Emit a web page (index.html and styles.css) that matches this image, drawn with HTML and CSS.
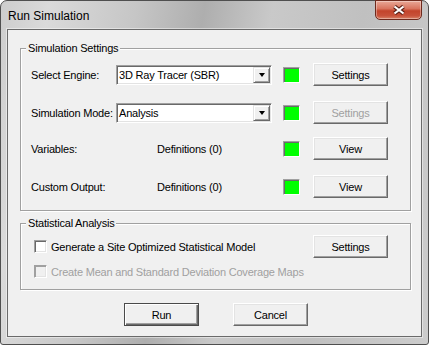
FILE: index.html
```html
<!DOCTYPE html>
<html lang="en">
<head>
<meta charset="utf-8">
<title>Run Simulation</title>
<link rel="stylesheet" href="styles.css">
</head>
<body>
<div class="window">
  <!-- title bar -->
  <div class="titlebar">
    <span class="title">Run Simulation</span>
    <button class="close" aria-label="Close">
      <svg width="14" height="10" viewBox="0 0 14 10">
        <path d="M2.5 1.5 L11.5 8.5 M11.5 1.5 L2.5 8.5" stroke="#5a2016" stroke-width="4.2" fill="none"/>
        <path d="M2.5 1.5 L11.5 8.5 M11.5 1.5 L2.5 8.5" stroke="#fff" stroke-width="2.2" fill="none"/>
      </svg>
    </button>
  </div>

  <div class="client">
    <!-- simulation settings -->
    <div class="group group-sim">
      <div class="group-title">Simulation Settings</div>

      <div class="row row-first">
        <span class="label">Select Engine:</span>
        <div class="combo"><span class="combo-text">3D Ray Tracer (SBR)</span><span class="combo-btn"></span></div>
        <span class="led"></span>
        <button class="btn">Settings</button>
      </div>

      <div class="row">
        <span class="label">Simulation Mode:</span>
        <div class="combo"><span class="combo-text">Analysis</span><span class="combo-btn"></span></div>
        <span class="led"></span>
        <button class="btn" disabled>Settings</button>
      </div>

      <div class="row row-tight">
        <span class="label">Variables:</span>
        <span class="value">Definitions (0)</span>
        <span class="led"></span>
        <button class="btn">View</button>
      </div>

      <div class="row">
        <span class="label">Custom Output:</span>
        <span class="value">Definitions (0)</span>
        <span class="led"></span>
        <button class="btn">View</button>
      </div>
    </div>

    <!-- statistical analysis -->
    <div class="group group-stat">
      <div class="group-title">Statistical Analysis</div>

      <div class="row row-check">
        <span class="check"></span>
        <span class="check-label">Generate a Site Optimized Statistical Model</span>
        <button class="btn btn-right">Settings</button>
      </div>

      <div class="row row-check row-small is-disabled">
        <span class="check"></span>
        <span class="check-label">Create Mean and Standard Deviation Coverage Maps</span>
      </div>
    </div>

    <div class="actions">
      <button class="btn btn-default">Run</button>
      <button class="btn">Cancel</button>
    </div>
  </div>
</div>
</body>
</html>
```

FILE: styles.css
```css
/* ── base ───────────────────────────── */
*,*::before,*::after{box-sizing:border-box}
html,body{margin:0;background:#fff}
body{font-family:"Liberation Sans",Arial,sans-serif;font-size:11px;
     color:#000;letter-spacing:-.2px}

/* ── window frame ───────────────────── */
.window{width:429px;height:345px;display:flex;flex-direction:column;
        padding:0 6px 7px;border:1px solid #4f4f4f;border-radius:7px 7px 3px 3px;
        background:linear-gradient(100deg,#cdcdcd 0%,#dadada 10%,#c6c6c6 28%,
                   #aeaeae 42%,#c9c9c9 56%,#c0c0c0 75%,#cccccc 100%)}
.titlebar{height:28px;flex:none;display:flex;align-items:flex-start;
          justify-content:space-between}
.title{margin:8px 0 0 1px;font-size:12px;line-height:15px;letter-spacing:0}
.close{width:47px;height:20px;margin-top:-1px;padding:0;
       display:flex;align-items:center;justify-content:center;
       border:1px solid #6e2a1d;border-radius:0 0 5px 5px;
       background:linear-gradient(#e9a897,#d9755f 42%,#c3442b 55%,#c8523a 82%,#d98468);
       box-shadow:inset 0 0 0 1px rgba(255,255,255,.35)}

/* ── client area ────────────────────── */
.client{flex:1;display:flex;flex-direction:column;padding-top:18px;
        background:#f0f0f0;border:1px solid #6a6a6a;
        box-shadow:0 0 0 1px rgba(255,255,255,.45)}

/* ── group boxes ────────────────────── */
.group{margin:0 10px 0 12px;padding:0 22px 12px 10px;
       border:1px solid #a0a0a0;box-shadow:inset 1px 1px #fff,1px 1px #fff}
.group-stat{margin-top:12px;padding-bottom:11px}
.group-title{width:max-content;margin:-7px 0 0 -5px;padding:0 2px;
             line-height:13px;background:#f0f0f0}

.row{display:flex;align-items:center;height:23px;margin-top:15px}
.row-first{margin-top:8px}
.row-tight{margin-top:13px}
.group-stat .row-check{margin-top:5px}
.group-stat .row-small{height:13px;margin-top:7px}

.label{width:85px;flex:none;white-space:nowrap}
.value{width:156px;flex:none;padding-left:41px;white-space:nowrap}

/* ── combo box ──────────────────────── */
.combo{width:156px;height:20px;flex:none;display:flex;padding:1px;background:#fff;
       border:1px solid;border-color:#a0a0a0 #fff #fff #a0a0a0;
       box-shadow:inset 1px 1px #696969,inset -1px -1px #e3e3e3}
.combo-text{flex:1;padding-left:1px;line-height:16px;white-space:nowrap;overflow:hidden}
.combo-btn{width:17px;height:16px;flex:none;display:flex;align-items:center;
           justify-content:center;background:#f0f0f0;
           border:1px solid;border-color:#e3e3e3 #696969 #696969 #e3e3e3;
           box-shadow:inset 1px 1px #fff,inset -1px -1px #a0a0a0}
.combo-btn::after{content:"";width:1px;height:0;
                  border-left:3px solid transparent;border-right:3px solid transparent;
                  border-top:4px solid #000}

/* ── status indicator ───────────────── */
.led{width:17px;height:16px;flex:none;margin:0 13px 0 11px;background:#00ff00;
     border:1px solid;border-color:#a0a0a0 #fff #fff #a0a0a0;
     box-shadow:inset 1px 1px #696969}

/* ── checkbox ───────────────────────── */
.check{width:13px;height:13px;flex:none;margin-left:3px;background:#fff;
       border:1px solid;border-color:#a0a0a0 #fff #fff #a0a0a0;
       box-shadow:inset 1px 1px #696969,inset -1px -1px #e3e3e3}
.check-label{margin-left:4px;white-space:nowrap}
.is-disabled .check{background:#f0f0f0;
       box-shadow:inset 1px 1px #a0a0a0,inset -1px -1px #e3e3e3}
.is-disabled .check-label{color:#a0a0a0}

/* ── buttons ────────────────────────── */
.btn{width:75px;height:23px;flex:none;padding:0;font:inherit;letter-spacing:inherit;
     color:#000;background:#f0f0f0;
     border:1px solid;border-color:#fff #696969 #696969 #fff;
     box-shadow:inset -1px -1px #a0a0a0,inset 1px 1px #e3e3e3}
.btn:disabled{color:#a0a0a0}
.btn-right{margin-left:auto}
.btn-default{border:1px solid #4a4a4a;
     box-shadow:inset 1px 1px #fff,inset -1px -1px #696969,inset -2px -2px #a0a0a0}

.actions{display:flex;justify-content:center;gap:34px;margin-top:13px;padding-left:3px}
```
